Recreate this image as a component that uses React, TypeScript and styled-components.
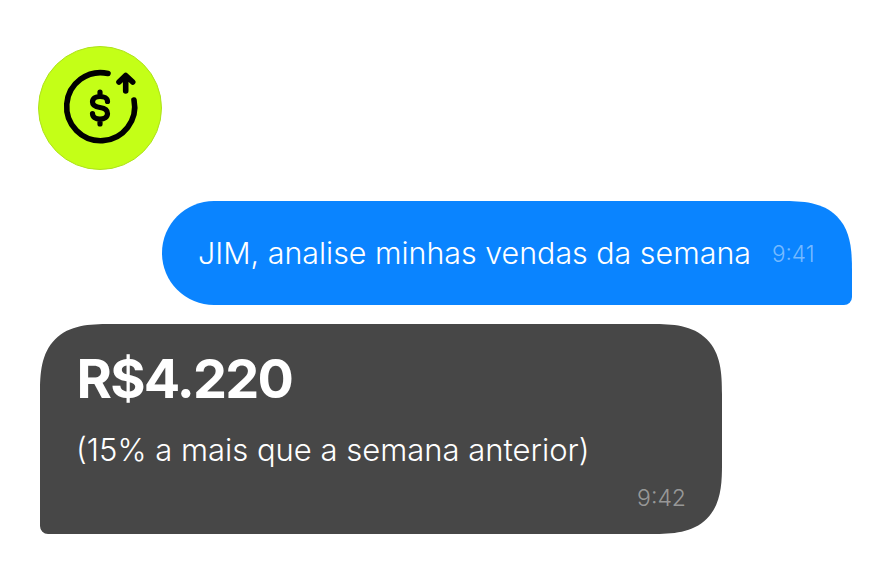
import React from "react";
import styled, { createGlobalStyle } from "styled-components";

const Global = createGlobalStyle`
  html, body { margin: 0; padding: 0; background: #fff; }
  body { font-family: Inter, "Noto Sans", sans-serif; }
`;

const Page = styled.div`
  width: 880px;
  height: 580px;
  box-sizing: border-box;
  padding: 46px 28px 0 38px;
  display: flex;
  flex-direction: column;
  overflow: hidden;
`;

const Avatar = styled.div`
  width: 124px;
  height: 124px;
  box-sizing: border-box;
  border-radius: 50%;
  background: #c4ff17;
  border: 1px solid #aee21c;
  display: flex;
  align-items: center;
  justify-content: center;
`;

const Outgoing = styled.div`
  align-self: flex-end;
  margin-top: 31px;
  width: 690px;
  height: 104px;
  box-sizing: border-box;
  padding: 0 37.5px 0 36px;
  display: flex;
  align-items: center;
  justify-content: space-between;
  background: #0a84ff;
  color: #fff;
  border-radius: 52px 70px 8px 52px;
  corner-shape: round superellipse(1.5) round round;
`;

const Message = styled.span`
  font-size: 30.4px;
  font-weight: 300;
  white-space: nowrap;
`;

const OutTime = styled.span`
  font-size: 22.5px;
  font-weight: 300;
  color: rgba(255, 255, 255, 0.45);
`;

const Incoming = styled.div`
  margin-top: 19px;
  margin-left: 2px;
  width: 682px;
  height: 210px;
  box-sizing: border-box;
  padding: 22px 36px 0 37px;
  display: flex;
  flex-direction: column;
  background: #474747;
  color: #fff;
  border-radius: 70px 70px 70px 8px;
  corner-shape: superellipse(1.5) superellipse(1.5) superellipse(1.5) round;
`;

const Amount = styled.div`
  font-size: 54px;
  font-weight: 700;
  line-height: 66px;
  letter-spacing: -1.75px;
  margin-left: -0.5px;
`;

const Detail = styled.div`
  margin-top: 18px;
  margin-left: -1px;
  font-size: 31px;
  font-weight: 300;
  line-height: 40px;
  white-space: nowrap;
`;

const InTime = styled.div`
  align-self: flex-end;
  margin-top: 14px;
  font-size: 23px;
  font-weight: 300;
  color: rgba(255, 255, 255, 0.45);
`;

const Icon = () => (
  <svg width="124" height="124" viewBox="0 0 124 124" fill="none" stroke="#000" strokeLinecap="round" strokeLinejoin="round" style={{ margin: -1 }}>
    <path d="M70 27.500A34 34 0 1 0 96 54" strokeWidth="5.6" />
    <path d="M87.700 30V45M81 36L87.700 29.500L94.700 36" strokeWidth="5.6" />
    <path d="M69.500 55.500C69.500 52 66 50.500 62 50.500C57.500 50.500 54.500 52.500 54.500 56C54.500 60 58 61 62 61.500C66 62 69.500 63.500 69.500 67.500C69.500 71 66.500 73 62 73C57.500 73 54.500 71 54.500 67.500M62 46V50.500M62 73V78" strokeWidth="5.200" />
  </svg>
);

export default function App() {
  return (
    <>
      <Global />
      <Page>
        <Avatar>
          <Icon />
        </Avatar>
        <Outgoing>
          <Message>JIM, analise minhas vendas da semana</Message>
          <OutTime>9:41</OutTime>
        </Outgoing>
        <Incoming>
          <Amount>R$4.220</Amount>
          <Detail>(15% a mais que a semana anterior)</Detail>
          <InTime>9:42</InTime>
        </Incoming>
      </Page>
    </>
  );
}
